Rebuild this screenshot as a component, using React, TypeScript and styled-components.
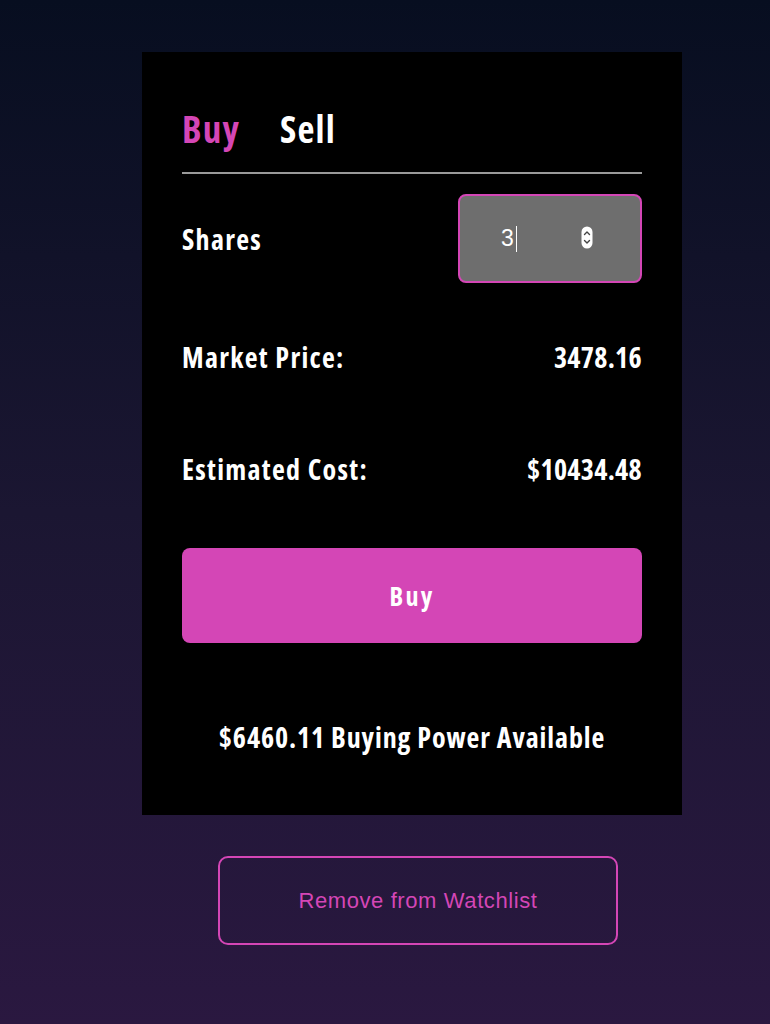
import styled, {createGlobalStyle} from "styled-components";
import {useState} from "react";

const GlobalStyle = createGlobalStyle`
  html, body {
    margin: 0;
    padding: 0;
  }
  body {
    min-height: 1024px;
    background: linear-gradient(180deg, #070e20 0%, #1b1632 50%, #2a1840 100%);
    font-family: "Open Sans", "Noto Sans", sans-serif;
  }
`;

function App() {
  const [mode, setMode] = useState<"buy" | "sell">("buy");
  const shares = 3;
  const price = 3478.16;

  return (
      <Page>
        <GlobalStyle/>
        <Card>
          <Tabs>
            <Tab type="button" $active={mode === "buy"} onClick={() => setMode("buy")}>Buy</Tab>
            <Tab type="button" $active={mode === "sell"} onClick={() => setMode("sell")}>Sell</Tab>
          </Tabs>
          <SharesRow>
            <Label>Shares</Label>
            <SharesBox>
              <SharesValue>{shares}<Caret/></SharesValue>
              <Spinner width="12" height="23" viewBox="0 0 12 23">
                <rect x="0.5" y="0.5" width="11" height="22" rx="5.5" fill="#fff"/>
                <path d="M3.5 8.5 L6 6 L8.5 8.5" stroke="#444" strokeWidth="1.4" fill="none" strokeLinecap="round"
                      strokeLinejoin="round"/>
                <path d="M3.5 14.5 L6 17 L8.5 14.5" stroke="#444" strokeWidth="1.4" fill="none" strokeLinecap="round"
                      strokeLinejoin="round"/>
              </Spinner>
            </SharesBox>
          </SharesRow>
          <InfoRow $gap={54}>
            <Label>Market Price:</Label>
            <Value>{price.toFixed(2)}</Value>
          </InfoRow>
          <InfoRow $gap={72}>
            <Label>Estimated Cost:</Label>
            <Value>${(price * shares).toFixed(2)}</Value>
          </InfoRow>
          <BuyButton type="button">Buy</BuyButton>
          <Power>$6460.11 Buying Power Available</Power>
        </Card>
        <WatchButton type="button">Remove from Watchlist</WatchButton>
      </Page>
  );
}

/* CSS */

const pink = "#d446b6";

const Page = styled.div`
  display: flex;
  flex-direction: column;
  align-items: flex-start;
  padding: 52px 0 0 142px;
`;

const Card = styled.div`
  width: 540px;
  box-sizing: border-box;
  background: #000;
  padding: 59px 40px 58px;
  display: flex;
  flex-direction: column;
`;

const Tabs = styled.div`
  display: flex;
  gap: 40px;
  padding-bottom: 25px;
  border-bottom: 2px solid #9a9a9a;
`;

const Tab = styled.button<{ $active: boolean }>`
  background: none;
  border: none;
  padding: 0;
  font-family: inherit;
  font-size: 37px;
  line-height: 36px;
  font-weight: 700;
  font-stretch: 75%;
  letter-spacing: 1.2px;
  color: ${p => p.$active ? pink : "#fff"};
  cursor: pointer;
`;

const SharesRow = styled.div`
  display: flex;
  justify-content: space-between;
  align-items: center;
  margin-top: 20px;
`;

const Label = styled.span`
  font-size: 28px;
  line-height: 40px;
  color: #fff;
  font-weight: 700;
  font-stretch: 75%;
  letter-spacing: 1.3px;
`;

const Value = styled(Label)`
  letter-spacing: 0.3px;
`;

const SharesBox = styled.div`
  width: 184px;
  height: 89px;
  box-sizing: border-box;
  border: 2px solid ${pink};
  border-radius: 8px;
  background: #6e6e6e;
  display: flex;
  align-items: center;
  padding: 0 47px 0 41px;
  justify-content: space-between;
`;

const SharesValue = styled.span`
  font-family: "Liberation Sans", Arial, sans-serif;
  font-size: 23px;
  color: #fff;
  display: flex;
  align-items: center;
`;

const Caret = styled.span`
  display: inline-block;
  width: 1px;
  height: 26px;
  background: #fff;
  margin-left: 2px;
`;

const Spinner = styled.svg`
  display: block;
  margin-top: -2px;
`;

const InfoRow = styled.div<{ $gap: number }>`
  display: flex;
  justify-content: space-between;
  align-items: center;
  height: 40px;
  margin-top: ${p => p.$gap}px;
`;

const BuyButton = styled.button`
  margin-top: 59px;
  height: 95px;
  border: none;
  border-radius: 8px;
  background: ${pink};
  color: #fff;
  font-family: inherit;
  font-size: 26px;
  font-weight: 700;
  font-stretch: 75%;
  letter-spacing: 2.2px;
  cursor: pointer;
`;

const Power = styled(Label)`
  margin-top: 74px;
  text-align: center;
  letter-spacing: 0.9px;
`;

const WatchButton = styled.button`
  margin: 41px 0 0 76px;
  width: 400px;
  height: 89px;
  background: transparent;
  border: 2px solid ${pink};
  border-radius: 10px;
  color: ${pink};
  font-family: "Liberation Sans", Arial, sans-serif;
  font-size: 22px;
  letter-spacing: 0.6px;
  cursor: pointer;
`;

/* CSS */

export default App;
